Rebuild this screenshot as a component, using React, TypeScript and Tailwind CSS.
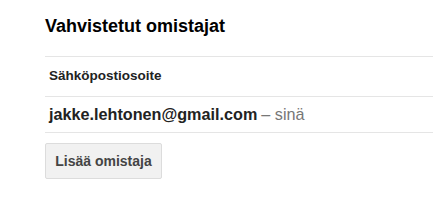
export default function App() {
  return (
    <div className="min-h-screen bg-white pl-[45px] pt-[14px] font-['Liberation_Sans',Arial,sans-serif] text-[#222]">
      <h2 className="h-[24px] text-[18px] leading-[24px] font-bold text-[#000]">Vahvistetut omistajat</h2>
      <div className="mt-[18px] border-t border-[#e5e5e5]">
        <div className="flex h-[40px] items-center border-b border-[#e5e5e5] px-[4px] text-[13.5px] font-bold">
          Sähköpostiosoite
        </div>
        <div className="flex h-[36px] items-center border-b border-[#e5e5e5] px-[4px] text-[16.2px]">
          <span className="font-bold">jakke.lehtonen@gmail.com</span>
          <span className="ml-[4px] text-[#777]">– sinä</span>
        </div>
      </div>
      <button className="mt-[10px] h-[36px] w-[117px] rounded-[2px] border border-[#dcdcdc] bg-[#f1f1f1] text-[14px] font-bold text-[#444]">
        Lisää omistaja
      </button>
    </div>
  );
}
